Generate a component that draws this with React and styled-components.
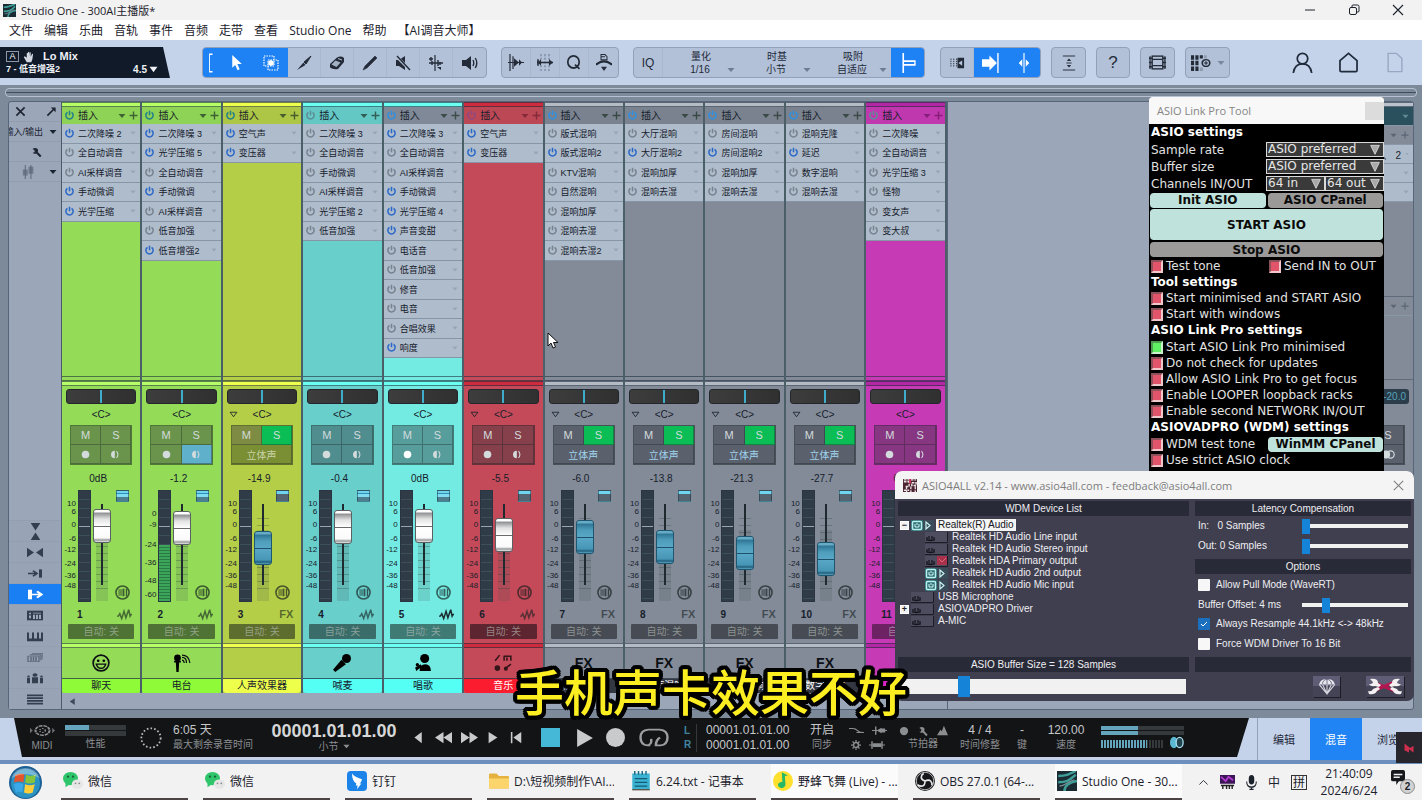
import React, { useState } from 'react'
import styled, { createGlobalStyle } from 'styled-components'

const GlobalStyle = createGlobalStyle`
    * {
        box-sizing: border-box;
    }

    body {
        margin: 0;
        font-family: "Open Sans", "Noto Sans CJK SC", sans-serif;
        font-size: 12px;
        color: #1c222c;
    }

    button, input, select {
        font: inherit;
        color: inherit;
        margin: 0;
        padding: 0;
        border: 0;
        background: none;
    }
`

const ui = '"Liberation Sans", "Noto Sans CJK SC", sans-serif'

const Page = styled.div`
    position: relative;
    display: flex;
    flex-direction: column;
    min-height: 100vh;
    overflow: hidden;
    background: #7d8a9a;
`

/* ---------- icons ---------- */

const shapes = {
    logo: <><path d="M0 0h16v16H0z" fill="#1a2b33" /><path d="M1 4c6 0 8-1 14-4M1 9c8 0 9-2 14-6M6 16c0-5 4-7 10-8" stroke="#3f9d98" strokeWidth="2" fill="none" /><path d="M2 12c5 0 5-3 12-5" stroke="#7b8f98" fill="none" /></>,
    min: <path d="M3 8h10" stroke="currentColor" />,
    restore: <><rect x="3.500" y="5.500" width="7" height="7" rx="1.500" fill="none" stroke="currentColor" /><path d="M6 5V4q0-1 1-1h4.500q1.500 0 1.500 1.500V9q0 1-1 1h-1" fill="none" stroke="currentColor" /></>,
    close: <path d="M3 3l10 10M13 3L3 13" stroke="currentColor" strokeWidth="1.100" />,
    cross: <path d="M2 2l12 12M14 2L2 14" stroke="currentColor" strokeWidth="2.400" />,
    power: <path d="M5 3.500A5.300 5.300 0 1 0 11 3.500M8 1v6.500" stroke="currentColor" strokeWidth="2.200" fill="none" />,
    caret: <path d="M1 4h14L8 12z" fill="currentColor" />,
    drop: <path d="M1 2h14L8 15z" fill="#a9a9a9" stroke="#e3e3e3" strokeWidth="1.200" />,
    caretLine: <path d="M2 4h12L8 12z" fill="none" stroke="currentColor" strokeWidth="1.500" />,
    plus: <path d="M8 1v14M1 8h14" stroke="currentColor" strokeWidth="2.500" />,
    hand: <path d="M5 15L1 8l1.500-1L5 9V3q.8-1 1.500 0v4V1.500q1-1 1.700 0V7l.5-5q1-1 1.600 0v5.500L12 4q1-.8 1.400.3L12.500 11 11 15z" fill="#d3d8e2" />,
    bracket: <path d="M10 1H6v14h4" fill="none" stroke="currentColor" strokeWidth="1.200" />,
    cursor: <path d="M4 1l9 8.500H8.800l2.200 4.800-2 .9-2.200-4.900L4 13z" fill="currentColor" />,
    marquee: <><path d="M1 1h10v10H1zM5 5h10v10H5z" fill="none" stroke="currentColor" strokeWidth="1.200" strokeDasharray="1.500 1" /><path d="M6 6l4 4M10 6l-4 4M8 5v6M5 8h6" stroke="currentColor" strokeWidth="1.500" /></>,
    brush: <><path d="M15 1L8 7l2 2z" fill="currentColor" stroke="currentColor" /><path d="M7.500 7.500L1 15l8.500-5z" fill="currentColor" /></>,
    eraser: <><path d="M1 9L8 2.500q4-2 7 .5v4L9 14q-5 1-8-1.500z" fill="currentColor" /><path d="M2.500 9.500l4-4 5 2-4 4.500z" fill="#a3b1c5" /><path d="M9 3.500l4 1.500" stroke="#b4c2d6" /></>,
    pencil: <path d="M13 1l2 2L5 13l-4 2 2-4z" fill="currentColor" stroke="currentColor" strokeWidth=".6" />,
    mute: <><path d="M1 5h3l6-4v14l-6-4H1z" fill="currentColor" /><path d="M1 1l14 14" stroke="#b2c1d8" strokeWidth="3" /><path d="M2 1l13 14" stroke="currentColor" strokeWidth="1.400" /></>,
    bend: <><path d="M7 0v16" stroke="currentColor" strokeWidth="1.200" /><path d="M1 4h4M3 2v4M1 8h14" stroke="currentColor" strokeWidth="1.300" fill="none" /><path d="M4 6v4M10 5v6M12 7v3" stroke="currentColor" strokeWidth="1.400" /><path d="M9 12h4v3z" fill="currentColor" /></>,
    listen: <><path d="M0 5h4l5-4v14l-5-4H0z" fill="currentColor" /><path d="M11 5q1.500 3 0 6M13.300 3q3 5 0 10" fill="none" stroke="currentColor" strokeWidth="1.400" /></>,
    strip1: <><path d="M2 0v16M5 2v12" stroke="currentColor" strokeWidth="1.200" /><path d="M6 4l5 4-5 4zM11 5l3 3-3 3z" fill="currentColor" /><path d="M0 8h16" stroke="currentColor" /></>,
    strip2: <><path d="M4 0v16M8 0v16M12 0v16" stroke="currentColor" strokeDasharray="2 1.500" strokeOpacity=".5" /><path d="M0 8h16M1 5v6" stroke="currentColor" strokeWidth="1.600" /><path d="M12 5l4 3-4 3zM4 5L1 8l3 3z" fill="currentColor" /></>,
    q: <><circle cx="7.500" cy="7.500" r="5.700" fill="none" stroke="currentColor" strokeWidth="1.700" /><path d="M9 10l4.500 4" stroke="currentColor" strokeWidth="1.700" /></>,
    lens: <><path d="M0 10q8-6 16 0" fill="none" stroke="currentColor" strokeWidth="2" /><path d="M5 .5h4l2 2v3H5zM5 2.500h4" fill="none" stroke="currentColor" /><path d="M5 12h6l-3 4z" fill="currentColor" /></>,
    snap: <><path d="M4 0v16" stroke="currentColor" strokeWidth="1.500" /><path d="M4 6.500h11v3H4" fill="none" stroke="currentColor" strokeWidth="1.300" /></>,
    follow: <><path d="M1 3v10M4 3v10M7 3v10" stroke="currentColor" strokeDasharray="1.500 1" /><path d="M8 2h7v12H8z" fill="currentColor" /><path d="M13 5v6l-4-3z" fill="#b9c8de" /></>,
    arrowBar: <><path d="M0 5h7V2l7 6-7 6v-3H0z" fill="currentColor" /><path d="M15 0v16" stroke="currentColor" strokeWidth="1.300" /></>,
    split: <><path d="M8 0v16" stroke="currentColor" strokeWidth="1.300" /><path d="M6 5v6L2 8zM10 5v6l4-3z" fill="currentColor" /></>,
    vfit: <><path d="M1 1h14M1 15h14M5 8h6" stroke="currentColor" /><path d="M5.500 6L8 3.500 10.500 6zM5.500 10L8 12.500l2.500-2.500z" fill="currentColor" /></>,
    film: <><rect x="3" y="2" width="10" height="12" fill="none" stroke="currentColor" strokeWidth="1.300" /><path d="M0 4h3M0 8h3M0 12h3M13 4h3M13 8h3M13 12h3M3 5h10M3 11h10M1 2v12M15 2v12" stroke="currentColor" strokeWidth="1.200" /></>,
    grid: <><path d="M0 1h2.500v4H0zM3.500 1H6v4H3.500zM0 6h2.500v4H0zM3.500 6H6v4H3.500zM0 11h2.500v4H0zM3.500 11H6v4H3.500zM7 1h2.500v3H7z" fill="currentColor" /><path d="M10.500 1h2v3h-2zM7 12h2.500v3H7z" fill="#8e9cb0" /><circle cx="12" cy="8" r="3" fill="none" stroke="currentColor" strokeWidth="1.300" /><path d="M12 6.500v3M10.500 8h3" stroke="currentColor" /></>,
    user: <><circle cx="8" cy="5" r="4" fill="none" stroke="currentColor" strokeWidth="1.300" /><path d="M1 16q1-7 7-7t7 7" fill="none" stroke="currentColor" strokeWidth="1.300" /></>,
    home: <path d="M1.500 6.500L8 1l6.500 5.500v7.500q0 1-1 1h-11q-1 0-1-1z" fill="none" stroke="currentColor" strokeWidth="1.300" />,
    page: <path d="M3 1h6l4 4v10H3z" fill="none" stroke="currentColor" />,
    pin: <><path d="M2 14L12 4" stroke="currentColor" strokeWidth="2.500" /><path d="M7 2h7v7z" fill="currentColor" /></>,
    wrench: <path d="M2 4q3-3 7 0 1 2 0 4l5 5-2 2-5-5q-3 1-5-1 3 0 3-2T2 4z" fill="currentColor" />,
    fader: <><path d="M4 0v16M11 0v16" stroke="currentColor" strokeWidth="1.200" /><path d="M1 5h6v7H1zM8 2h6v8H8z" fill="currentColor" fillOpacity=".7" /></>,
    hourglass: <path d="M1 0h14L8 7zM8 9l7 7H1z" fill="currentColor" />,
    bowtie: <path d="M0 1l7 7-7 7zM16 1L9 8l7 7z" fill="currentColor" />,
    toBar: <><path d="M1 8h8M6 4l4 4-4 4" stroke="currentColor" strokeWidth="2" fill="none" /><path d="M12 2h3v12h-3z" fill="currentColor" /></>,
    fromBar: <><path d="M1 1h4v14H1z" fill="currentColor" /><path d="M5 8h9M10 3.500L14.500 8 10 12.500" stroke="currentColor" strokeWidth="2.500" fill="none" /></>,
    rack: <><path d="M0 1h16v14H0z" fill="currentColor" /><path d="M2 4h2v2H2zM2 8h2v4H2zM6 7h2v6H6zM9 7h2v6H9zM12 7h2v6h-2zM6 4h8v1H6z" fill="#9ca8ba" /></>,
    keys: <path d="M0 2h2v9h3V2h2v9h3V2h2v9h2V2h2v13H0z" fill="currentColor" />,
    stack: <><path d="M1 6h11v8H1zM3 4h11v8M5 2h11v8" fill="none" stroke="currentColor" strokeWidth="1.300" /><path d="M4 7v6M6.500 7v6M9 7v6" stroke="currentColor" strokeWidth="1.500" /></>,
    people: <><path d="M0 7h3v8H0zM5 6h6v9H5zM13 7h3v8h-3z" fill="currentColor" /><circle cx="8" cy="3" r="2.500" fill="currentColor" /><circle cx="1.500" cy="5" r="1.300" fill="currentColor" /><circle cx="14.500" cy="5" r="1.300" fill="currentColor" /></>,
    lines: <path d="M0 2h16M0 6h16M0 10h16M0 14h16" stroke="currentColor" strokeWidth="2.200" />,
    wave: <path d="M0 10h1.500L3 7l2 6L7.500 4l2 8 3-10 1.500 8 1-2h1" stroke="currentColor" strokeWidth="1.600" fill="none" />,
    knob: <><circle cx="8" cy="8" r="7" fill="none" stroke="currentColor" strokeWidth="1.700" /><path d="M3.500 4.500h4v7h-4z" fill="currentColor" fillOpacity=".55" /><path d="M8 4h2v8H8zM11.500 4h1.500v8h-1.500z" fill="currentColor" /></>,
    dot: <circle cx="8" cy="8" r="5.500" fill="currentColor" />,
    monitor: <><path d="M7 2.500a5.500 5.500 0 0 0 0 11z" fill="currentColor" /><path d="M9.500 3q4 5 0 10" fill="none" stroke="currentColor" strokeWidth="1.500" /></>,
    stereo: <><circle cx="5" cy="8" r="5" fill="currentColor" /><circle cx="10.500" cy="8" r="4.500" fill="none" stroke="currentColor" strokeWidth="1.500" /></>,
    link: <><ellipse cx="4.500" cy="8" rx="4.500" ry="7" fill="#5cb9d4" /><ellipse cx="11" cy="8" rx="4" ry="6.200" fill="#23434e" stroke="#a9e0ee" strokeWidth="1.500" /></>,
    smile: <><circle cx="8" cy="8" r="7" fill="none" stroke="#0c0f14" strokeWidth="1.500" /><circle cx="5.500" cy="6" r="1.200" /><circle cx="10.500" cy="6" r="1.200" /><path d="M3.800 9h8.400q-1 3.700-4.200 3.700T3.800 9z" fill="none" stroke="#0c0f14" strokeWidth="1.300" /></>,
    radio: <><circle cx="4" cy="3.500" r="3" /><path d="M2.500 7h3l-.5 9H3zM1 6h6v1.500H1z" /><path d="M8 3q4 0 4 5M8 1q6 0 7 7M8 5.500q1.500 0 2 2.500" fill="none" stroke="#0c0f14" strokeWidth="1.100" /></>,
    mic: <><circle cx="12" cy="4" r="4" /><path d="M7.500 5l4 4L2 16l-2-2z" /></>,
    singer: <><circle cx="9.500" cy="4" r="4" /><path d="M5 15q0-6 5-6t5 6zM1 12l5-3 1 2-5 4z" /><circle cx="3" cy="9.500" r="1.500" /></>,
    band: <><path d="M1 6l4-5M8.500 2h6.500v4M9 2v4M11.500 3v3M10 13l5-4" stroke="#35141a" strokeWidth="1.400" fill="none" /><circle cx="3" cy="12.500" r="2.500" fill="#35141a" /><circle cx="10.500" cy="13" r="1.800" fill="#35141a" /></>,
    midi: <><circle cx="8" cy="8" r="4.500" fill="none" stroke="#8d9094" strokeDasharray="2.500 .6" strokeWidth="1.300" /><circle cx="8" cy="8" r="1.800" fill="none" stroke="#8d9094" strokeDasharray="1 1" /><path d="M0 5.500L1.800 8 0 10.500zM14.200 5.500L16 8l-1.800 2.500z" fill="#6b6e72" /></>,
    ring: <circle cx="8" cy="8" r="7" fill="none" stroke="#b8babc" strokeWidth="1.300" strokeDasharray="1.200 1.500" />,
    back: <path d="M12 2v12L3 8z" fill="currentColor" />,
    rew: <path d="M8 2v12L0 8zM16 2v12L8 8z" fill="currentColor" />,
    fwd: <path d="M0 2v12l8-6zM8 2v12l8-6z" fill="currentColor" />,
    next: <path d="M3 2v12l10-6z" fill="currentColor" />,
    start: <><path d="M14 2v12L5 8z" fill="currentColor" /><path d="M3 2v12" stroke="currentColor" strokeWidth="1.800" /></>,
    stop: <path d="M0 0h16v16H0z" fill="#45b8d8" />,
    play: <path d="M1 0v16l14-8z" fill="currentColor" />,
    rec: <circle cx="8" cy="8" r="8" fill="currentColor" />,
    loop: <path d="M6 14H4.500Q.8 13.500.8 8T5 2h6q4.200.5 4.200 6t-3.700 6H9q0-4 2.200-6M4 14q3 0 2.500-5" fill="none" stroke="currentColor" strokeWidth="1.300" />,
    curve: <path d="M0 5h4q3 0 5 3t7 3M8 11h6" fill="none" stroke="currentColor" strokeWidth="1.500" />,
    gear: <><circle cx="8" cy="8" r="4" fill="none" stroke="currentColor" strokeWidth="2.500" /><path d="M8 0v3M8 13v3M0 8h3M13 8h3M2.500 2.500l2 2M11.500 11.500l2 2M13.500 2.500l-2 2M4.500 11.500l-2 2" stroke="currentColor" strokeWidth="2" /></>,
    punch: <><path d="M4 2v12M0 8h16" stroke="currentColor" strokeWidth="1.500" /><path d="M5 8l5-4v8zM10 5h4v6h-4z" fill="currentColor" /></>,
    punch2: <><path d="M3 2v12M13 2v12M0 8h16" stroke="currentColor" strokeWidth="1.500" /><path d="M4 5h8v6H4z" fill="currentColor" /></>,
    metro: <path d="M0 15L5 7l2 2 3-8 6 14z" fill="currentColor" />,
    start7: <><circle cx="8" cy="8" r="8" fill="#1c5f94" /><circle cx="8" cy="8.500" r="7" fill="#2b93c4" /><path d="M3 4.500q2-1.500 4.500-.5L7 8q-2-1-4.600 0z" fill="#e2552c" /><path d="M8.300 4.200q2 1 4.700 0L12.500 8q-2.500 1-4.700 0z" fill="#86c440" /><path d="M2.300 8.800q2.500-1 4.600 0l-.5 4q-2-1-3 .2z" fill="#3ba8e8" /><path d="M7.800 8.800q2.200 1 4.700 0l-1 4q-2 1-4.200 0z" fill="#fbce3a" /><path d="M1 6q2-5 7-5t7 5Q8 2 1 6z" fill="#fff" fillOpacity=".35" /></>,
    wechat: <><ellipse cx="6" cy="6" rx="6" ry="5.300" fill="#2fc56b" /><path d="M2 10l0 3 3-2z" fill="#2fc56b" /><circle cx="4" cy="4.500" r=".9" fill="#17633a" /><circle cx="8" cy="4.500" r=".9" fill="#17633a" /><ellipse cx="11.500" cy="10.500" rx="4.500" ry="3.800" fill="#e6e6e6" /><circle cx="10" cy="9.800" r=".7" fill="#8b8b8b" /><circle cx="13" cy="9.800" r=".7" fill="#8b8b8b" /></>,
    ding: <><rect width="16" height="16" rx="3" fill="#1c84e8" /><path d="M4 2q2 3 8 4.500-.5 2.500-2 3.500h1.500L8 14.500l.5-3H7l.5-1.500Q4 8 4 2z" fill="#fff" /></>,
    folder: <><path d="M0 3q0-1 1-1h5l2 2h7q1 0 1 1v9H0z" fill="#e6b23f" /><path d="M0 6h16v7q0 1-1 1H1q-1 0-1-1z" fill="#fbd56c" /></>,
    note: <><path d="M1 2h14v13H1z" fill="#3ab3d3" /><path d="M3 6h10M3 9h10M3 12h10" stroke="#155b76" /><path d="M3 0v3M6 0v3M9 0v3M12 0v3" stroke="#1f6b84" strokeWidth="1.200" /><path d="M1 15h14" stroke="#5d4b3c" /></>,
    music: <><circle cx="8" cy="8" r="8" fill="#ffe02e" /><path d="M7 1l5 2.500-2.500.5.5 7q-1 3-3.500 2.500T4 11t3.500-2.500z" fill="#27b866" /></>,
    obs: <><circle cx="8" cy="8" r="8" fill="#16171a" /><g fill="none" stroke="#e9e9e9" strokeWidth="1.300"><path d="M8 8q-3-1-3-3t2-3M8 8q3-1.500 4.500 0t1 3.500M8 8q0 3.500-2 4t-4-1" /><circle cx="8" cy="8" r="7" strokeWidth=".6" /></g></>,
    up: <path d="M2 11l6-6 6 6" fill="none" stroke="currentColor" strokeWidth="1.300" />,
    toolTray: <><path d="M0 0h16v10H0z" fill="#3c1558" /><path d="M1 2l5 5 3-5 5 4" stroke="#b23bd0" strokeWidth="2" fill="none" /><path d="M1 12h14M3 12v4M7 12v4M10 12v4M13 12v4" stroke="#222" strokeWidth="1.500" /></>,
    mic2: <><rect x="4" y="0" width="8" height="10" rx="4" fill="currentColor" /><path d="M1 7q0 6 7 6t7-6M8 13v3M5 15.500h6" fill="none" stroke="currentColor" strokeWidth="1.500" /></>,
    chat: <path d="M0 2q0-2 2-2h12q2 0 2 2v8q0 2-2 2H9l-3 4v-4H2q-2 0-2-2zM3 4v1.500h10V4zM3 7v1.500h7V7z" fill="#16181c" fillRule="evenodd" />,
    asio: <><path d="M0 1h16v14H0z" fill="#4b2430" /><path d="M1 2h14M1 4h6v5H2M10 5h5v3h-5zM9 9v6M14 9v6M1 13h6M4 9v6" stroke="#ece5e8" strokeWidth="1.500" fill="none" strokeDasharray="3 1" /><path d="M8 1v5" stroke="#d0335a" strokeWidth="2" /></>,
    chute: <><path d="M1 6q1-5 7-5t7 5z" fill="#e6e6ee" /><path d="M1 6l7 9 7-9M4 6l4 9 4-9M8 6v9" stroke="#d3d3de" fill="none" /><path d="M4 6q0-4 4-5 4 1 4 5M8 1v5" stroke="#55536a" strokeWidth=".7" fill="none" /></>,
    tray: <path d="M4 4l5 4 3-2v6L8 9v3L4 10z" fill="#cf2f4e" />,
}

const Svg = styled.svg`
    display: block;
    flex: none;
`

function Icon({ name, size = 16, w, h, ...rest }) {
    return (
        <Svg
            viewBox="0 0 16 16"
            width={w || size}
            height={h || size}
            preserveAspectRatio="none"
            aria-hidden="true"
            {...rest}
        >
            {shapes[name]}
        </Svg>
    )
}

/* ---------- title bar and menu ---------- */

const TitleBar = styled.header`
    display: flex;
    align-items: center;
    height: 20px;
    padding: 0 16px 0 3px;
    gap: 5px;
    background: #f2f2f2;
    font-size: 11px;
`

const WindowButtons = styled.div`
    display: flex;
    gap: 28px;
    margin-left: auto;
`

const IconButton = styled.button`
    display: flex;
    align-items: center;
    justify-content: center;
    flex: none;
    color: ${(p) => p.$color || 'inherit'};
`

const Menu = styled.nav`
    display: flex;
    align-items: center;
    height: 20px;
    padding: 1px 0 0 9px;
    gap: 11px;
    background: #fff;

    button {
        line-height: 20px;
        white-space: nowrap;
    }
`

/* ---------- toolbar ---------- */

const Toolbar = styled.div`
    display: flex;
    align-items: center;
    height: 45px;
    padding-right: 16px;
    background: #c4d2ea;
    color: #1f2a3a;
`

const Info = styled.div`
    width: 170px;
    height: 31px;
    padding: 3px 12px 0 6px;
    background: #101a29;
    color: #eef1f6;
    font: bold 11px/13px ${ui};
    clip-path: polygon(0 0, 163px 0, 100% 100%, 0 100%);
`

const InfoLine = styled.div`
    display: flex;
    align-items: center;
    gap: 4px;
    height: 13px;

    b {
        margin-left: 4px;
    }

    small {
        font-size: 9px;
    }

    span {
        display: flex;
        gap: 2px;
        margin-left: auto;
        align-items: center;
        font-size: 10px;
    }
`

const Key = styled.span`
    && {
        border: 1px solid #8d97a8;
        margin: 0;
        width: 13px;
        height: 11px;
        justify-content: center;
        font-size: 9px;
        font-weight: normal;
    }
`

const Group = styled.div`
    display: flex;
    flex: none;
    height: 31px;
    margin-left: ${(p) => p.$gap || 10}px;
    border: 1px solid #92a1b9;
    border-radius: 4px;
    background: #b2c1d8;
    overflow: hidden;
`

const Tool = styled.button`
    display: flex;
    align-items: center;
    justify-content: center;
    gap: 6px;
    width: ${(p) => p.$w || 33}px;
    font: ${(p) => p.$size || 12}px ${ui};
    background: ${(p) => (p.$on ? '#1e82f5' : 'transparent')};
    color: ${(p) => (p.$on ? '#fff' : '#232b38')};
    border-right: 1px solid ${(p) => (p.$on ? '#1e82f5' : '#a9b8cf')};

    &:last-child {
        border-right: 0;
    }
`

const Pick = styled.label`
    display: flex;
    flex-direction: column;
    align-items: center;
    width: 76px;
    font: 10px/13px ${ui};
    padding-top: 2px;

    > span {
        display: flex;
        align-items: center;
        gap: 8px;
        width: 100%;
        padding-left: 18px;
        color: #6d7c92;
    }

    select {
        width: 38px;
        appearance: none;
        text-align: center;
        text-align-last: center;
        color: #1f2a3a;
    }
`

const Account = styled.div`
    display: flex;
    align-items: center;
    gap: 25px;
    margin-left: auto;
`

function ToolbarPick({ label, value }) {
    return (
        <Pick>
            {label}
            <span>
                <select defaultValue={value}>
                    <option>{value}</option>
                </select>
                <Icon name="caret" size={8} />
            </span>
        </Pick>
    )
}

/* ---------- mixer ---------- */

const Ruler = styled.div`
    height: 9px;
    margin: 3px 5px 4px;
    border: 1px solid #b6c2d2;
    border-radius: 4px;
    background: linear-gradient(#7d8a9a 3px, #3f4d60 3px, #3f4d60 4px, #7d8a9a 4px);
`

const Mixer = styled.main`
    flex: 1;
    display: grid;
    grid-template-columns: 53px minmax(0, 886fr) minmax(0, 467fr);
    margin: 0 8px 8px;
    border: 1px solid #56657a;
    border-radius: 3px;
    background: #9ba7b9;
    font-family: ${ui};
`

const Side = styled.aside`
    display: flex;
    flex-direction: column;
    border-right: 1px solid #4b596b;
    color: #1d2532;
`

const SideRow = styled.div`
    display: flex;
    align-items: center;
    justify-content: flex-end;
    height: 20px;
    gap: ${(p) => p.$gap || 6}px;
    padding-right: 4px;
    border-bottom: 1px solid #929eb0;
    font-size: 9px;
    white-space: nowrap;
    overflow: hidden;
`

const SideTools = styled.div`
    display: flex;
    flex-direction: column;
    margin-top: auto;
`

const SideTool = styled.button`
    display: flex;
    align-items: center;
    justify-content: center;
    height: 21px;
    border-top: 1px solid #939fb1;
    background: ${(p) => (p.$on ? '#1a7ff2' : '#98a4b6')};
    color: ${(p) => (p.$on ? '#fff' : p.$dim ? '#5c687b' : '#333e4f')};
`

const Console = styled.div`
    display: flex;
    flex-direction: column;
`

const Channels = styled.div`
    flex: 1;
    display: grid;
    grid-template-columns: repeat(11, minmax(0, 1fr));
`

const Strip = styled.section`
    display: flex;
    flex-direction: column;
    background: ${(p) => p.$c.base};
    border-right: 2px solid #4a5f68;
    color: #16202b;
`

const Bright = styled.div`
    height: 5px;
    flex: none;
    border-top: 1px solid rgba(30, 45, 60, 0.6);
    border-bottom: 1px solid rgba(30, 45, 60, 0.6);
    background: ${(p) => p.$c.bright};
`

const Head = styled.div`
    display: flex;
    align-items: center;
    gap: 3px;
    height: 17px;
    padding: 0 2px;
    background: ${(p) => p.$c.head || 'rgba(0, 20, 30, 0.04)'};
    font-size: 10px;
    line-height: 13px;

    span {
        margin: 0 auto 0 0;
    }
`

const Adders = styled.div`
    display: flex;
    align-items: center;
    gap: 3px;
    color: ${(p) => p.$c.ink || 'rgba(30, 50, 40, 0.7)'};
`

const Inserts = styled.ul`
    display: grid;
    grid-template-rows: repeat(12, 1fr);
    height: 234px;
    margin: 0 0 18px;
    padding: 0;
    list-style: none;
`

const Insert = styled.li`
    display: flex;
    align-items: center;
    gap: 3px;
    padding: 0 4px 0 2px;
    background: #afbccb;
    border-bottom: 1px solid #8796a7;
    font-size: 9px;
    white-space: nowrap;

    span {
        margin-right: auto;
    }
`

const Pan = styled.div`
    height: 15px;
    margin: 3px 4px;
    border: 1px solid #23272b;
    border-radius: 3px;
    background: linear-gradient(90deg, #3d3d3d, #303030);
    display: flex;
    justify-content: center;

    &::after {
        content: '';
        width: 2px;
        background: #3eaccb;
    }
`

const PanText = styled.div`
    display: grid;
    grid-template-columns: 1fr auto 1fr;
    align-items: center;
    height: 14px;
    padding: 0 6px;
    font-size: 10px;
`

const Switches = styled.div`
    display: grid;
    grid-template-columns: 1fr 1fr;
    grid-template-rows: 19px 19px;
    margin: 4px 8px 0;
    border: 1px solid rgba(20, 30, 30, 0.45);
    background: rgba(20, 30, 30, 0.15);
`

const Switch = styled.button`
    display: flex;
    align-items: center;
    justify-content: center;
    grid-column: ${(p) => (p.$wide ? '1 / 3' : 'auto')};
    border: solid rgba(20, 30, 30, 0.35);
    border-width: 0 1px 1px 0;
    background: ${(p) => p.$bg || (p.$flat ? '#5b606d' : p.$wide ? 'rgba(20, 30, 10, 0.25)' : 'rgba(60, 60, 70, 0.32)')};
    color: ${(p) => p.$ink || '#d3dbdc'};
    font-size: ${(p) => (p.$wide ? 10 : 11)}px;
`

const Level = styled.div`
    height: 25px;
    padding-right: 6px;
    line-height: 28px;
    text-align: center;
    font-size: 10px;
`

const MeterRow = styled.div`
    display: grid;
    grid-template-columns: 14px 13px 18px 16px;
    column-gap: 2px;
    height: 112px;
`

const Scale = styled.div`
    display: flex;
    flex-direction: column;
    text-align: right;
    font: 8px/8px ${ui};
`

const Mark = styled.span`
    margin-top: ${(p) => p.$top}px;
`

const Meter = styled.div`
    border: 1px solid #2a3442;
    background:
        linear-gradient(transparent 35px, #9aa4ae 35px, #9aa4ae 36px, transparent 36px),
        repeating-linear-gradient(#303b48 0, #303b48 8px, #3d5058 8px, #3d5058 9px);
    display: flex;
    align-items: flex-end;

    &::after {
        content: '';
        width: 100%;
        height: ${(p) => p.$fill || 0}px;
        background: repeating-linear-gradient(#3ba65a 0, #3ba65a 2px, #2b7a45 2px, #2b7a45 3px);
    }
`

const Slot = styled.div`
    background:
        linear-gradient(90deg, transparent 8px, #1f2930 8px, #1f2930 10px, transparent 10px) 0 14px / 100% 81px no-repeat,
        repeating-linear-gradient(rgba(40, 60, 60, 0.3) 0, rgba(40, 60, 60, 0.3) 1px, transparent 1px, transparent 7px) 3px 28px / 12px 72px no-repeat,
        linear-gradient(rgba(60, 80, 80, 0.17), rgba(60, 80, 80, 0.17)) 3px 40px / 12px 71px no-repeat;
`

const Fader = styled.input`
    display: block;
    appearance: none;
    writing-mode: vertical-lr;
    direction: rtl;
    width: 18px;
    height: 112px;

    &::-webkit-slider-thumb {
        appearance: none;
        width: 18px;
        height: 34px;
        border: 1px solid ${(p) => (p.$blue ? '#1f5670' : '#5b6063')};
        border-radius: 3px;
        background: ${(p) =>
            p.$blue
                ? 'linear-gradient(#67acc6 2px, #2f7594 3px, #4e9dbb 9px, #58a7c6 16px, #1d5169 16px, #1d5169 17px, #58a7c6 17px, #4896b6 28px, #1f5d79 30px, #5aa6c3)'
                : 'linear-gradient(#fff 2px, #8f9092 3px, #e2e2e2 9px, #fff 16px, #6b6b6b 16px, #6b6b6b 17px, #fff 17px, #fafafa 28px, #97999b 30px, #e8e8e8)'};
    }
`

const MeterSide = styled.div`
    display: flex;
    flex-direction: column;
    justify-content: space-between;
    align-items: center;
    padding: 0 0 2px 2px;
    color: rgba(20, 30, 30, 0.68);
`

const Mini = styled.div`
    width: 13px;
    height: 12px;
    border: 1px solid rgba(20, 50, 60, 0.5);
    background: ${(p) =>
        p.$half
            ? 'linear-gradient(#6fd4ee 3px, #566370 3px)'
            : 'linear-gradient(#6fd4ee 2px, #2e8fb0 2px, #2e8fb0 3px, #7fdcf2 3px, #7fdcf2 6px, #4d7f8e 6px)'};
`

const NumberRow = styled.div`
    display: flex;
    align-items: center;
    justify-content: space-between;
    height: 21px;
    padding: 3px 8px 0 15px;
    font-size: 10px;
    font-weight: bold;
`

const Kind = styled.span`
    color: ${(p) => (p.$strong ? '#1c2b30' : 'rgba(20, 30, 30, 0.6)')};
    font-size: 11px;
`

const Auto = styled.button`
    height: 15px;
    margin: 1px 6px 4px;
    border-radius: 1px;
    background: ${(p) => p.$c.auto || 'rgba(20, 30, 25, 0.55)'};
    color: rgba(190, 195, 190, 0.6);
    font-size: 10px;
    line-height: 14px;
`

const Badge = styled.div`
    flex: 1;
    display: flex;
    align-items: center;
    justify-content: center;
    min-height: 31px;
    border-bottom: 1px solid rgba(30, 45, 60, 0.7);
    font: bold 14px ${ui};
    color: #0c0f14;
`

const Name = styled.div`
    height: 14px;
    line-height: 14px;
    border-radius: 0 0 4px 4px;
    background: ${(p) => p.$c.name};
    color: ${(p) => p.$c.nameInk || '#16202b'};
    text-align: center;
    font-size: 10px;
    overflow: hidden;
`

const ScrollRow = styled.div`
    display: flex;
    align-items: center;
    height: 16px;
    padding-left: 6px;
    color: #3f4b5d;
`

const RightArea = styled.div`
    display: flex;
    flex-direction: column;
    align-items: flex-end;
    border-left: 1px solid #56657a;
`

const Master = styled.section`
    flex: 1;
    display: flex;
    flex-direction: column;
    width: 80px;
    background: #838b99;
    color: #5b6675;
    font-size: 10px;
`

const MasterRow = styled.div`
    display: flex;
    align-items: center;
    justify-content: flex-end;
    gap: 4px;
    height: 19px;
    padding-right: 4px;
    background: ${(p) => p.$bg || 'transparent'};
    border-bottom: 1px solid #8a97a7;
    color: ${(p) => p.$ink || 'inherit'};
`

const MasterGap = styled.div`
    height: ${(p) => p.$h}px;
    border-bottom: 1px solid #5f6b7a;
`

const MasterValue = styled.div`
    align-self: flex-end;
    margin: 9px 4px 17px;
    width: 60px;
    height: 15px;
    border-radius: 3px;
    background: #2b3d4a;
    color: #58a3ba;
    text-align: right;
    line-height: 15px;
    padding-right: 3px;
`

const palette = {
    green: { base: '#94db58', bright: '#b6ff66', name: '#8ffb38' },
    olive: { base: '#b5ce47', bright: '#efff4d', name: '#eeff4b' },
    cyan: { base: '#68cfcb', bright: '#6bfff2', name: '#54fff3' },
    aqua: { base: '#74ebe2', bright: '#6bfff2', name: '#54fff3', head: '#7f8997' },
    red: { base: '#c44a59', bright: '#cf2b3e', name: '#fb1c30', nameInk: '#fff', ink: 'rgba(110, 30, 45, .7)', auto: '#5d2530' },
    grey: { base: '#838b98', bright: '#b4bbc5', name: '#333742', nameInk: '#fff', head: '#79828e', auto: '#474b53' },
    pink: { base: '#c73ab5', bright: '#b427a4', name: '#d824c4', nameInk: '#fff', ink: 'rgba(110, 20, 100, .7)', auto: '#6d2264' },
}

// a leading "*" marks an insert that is switched on; fader runs from 0 (bottom) to 78 (top)
const channels = [
    { c: 'green', fader: 59, level: '0dB', icon: 'smile', name: '聊天', power: 1, inserts: ['*二次降噪 2', '全自动调音', 'AI采样调音', '*手动微调', '*光学压缩'] },
    { c: 'green', fader: 57, level: '-1.2', icon: 'radio', name: '电台', power: 1, live: true, inserts: ['*二次降噪 3', '*光学压缩 5', '全自动调音', '*手动微调', 'AI采样调音', '低音加强', '*低音增强2'] },
    { c: 'olive', fader: 37, level: '-14.9', fx: true, name: '人声效果器', power: 1, inserts: ['*空气声', '*变压器'] },
    { c: 'cyan', fader: 58, level: '-0.4', icon: 'mic', name: '喊麦', inserts: ['二次降噪 3', '全自动调音', '手动微调', 'AI采样调音', '光学压缩 2', '低音加强'] },
    { c: 'aqua', fader: 59, level: '0dB', icon: 'singer', name: '唱歌', power: 1, inserts: ['*二次降噪 3', '全自动调音', 'AI采样调音', '*手动微调', '*光学压缩 4', '*声音变甜', '电话音', '低音加强', '修音', '电音', '合唱效果', '*响度'] },
    { c: 'red', fader: 50, level: '-5.5', icon: 'band', name: '音乐', power: 1, fold: true, inserts: ['*空气声', '*变压器'] },
    { c: 'grey', fader: 48, level: '-6.0', fx: true, name: '版式混响', power: 1, inserts: ['版式混响', '*版式混响2', 'KTV混响', '自然混响', '混响加厚', '混响去湿', '混响去湿2'] },
    { c: 'grey', fader: 38, level: '-13.8', fx: true, name: '大厅混响', power: 1, inserts: ['大厅混响', '*大厅混响2', '混响加厚', '混响去湿'] },
    { c: 'grey', fader: 32, level: '-21.3', fx: true, name: '房间混响', power: 1, inserts: ['房间混响', '*房间混响2', '混响加厚', '混响去湿'] },
    { c: 'grey', fader: 26, level: '-27.7', fx: true, name: '数字混响', power: 1, inserts: ['混响克隆', '*延迟', '数字混响', '混响去湿'] },
    { c: 'pink', fader: 59, level: '0dB', icon: 'mic', name: '变声', inserts: ['二次降噪', '全自动调音', '光学压缩 3', '怪物', '变女声', '变大叔'] },
]

const scale = [[10, 10], [6, 0], [0, 5], [-6, 6], [-12, 3], [-24, 6], [-36, 4], [-48, 2]]
const liveScale = [[0, 20], [-9, 3], [-24, 12], [-36, 10], [-48, 10], [-60, 6]]

function ChannelStrip({ channel, number }) {
    const c = palette[channel.c]
    const grey = channel.c === 'grey'
    const [value, setValue] = useState(channel.fader)

    return (
        <Strip $c={c}>
            <Bright $c={c} />
            <Head $c={c}>
                <Icon name="power" size={11} color={channel.power ? (channel.c === 'red' ? '#8e4a80' : grey || c.head ? '#2f8fe0' : '#217f8c') : '#5d8c96'} />
                <span>插入</span>
                <Adders $c={c}>
                    <Icon name="caret" size={8} />
                    <Icon name="plus" size={9} />
                </Adders>
            </Head>
            <Inserts>
                {channel.inserts.map((text) => {
                    const on = text[0] === '*'
                    return (
                        <Insert key={text}>
                            <Icon name="power" size={11} color={on ? '#2a68c8' : '#76828f'} />
                            <span>{on ? text.slice(1) : text}</span>
                            <Icon name="caret" size={6} color="#97a5b5" />
                        </Insert>
                    )
                })}
            </Inserts>
            <Bright $c={{ bright: c.base }} />
            <Bright $c={c} />
            <Pan />
            <PanText>
                <span>{(channel.fx || channel.fold) && <Icon name="caretLine" size={9} />}</span>
                <span>&lt;C&gt;</span>
            </PanText>
            <Switches>
                <Switch $flat={grey}>M</Switch>
                <Switch $flat={grey} $bg={channel.fx && '#0bbd55'}>S</Switch>
                {channel.fx ? (
                    <Switch $wide $flat={grey} $ink={grey ? '#9fd3ec' : '#c9d2a8'}>立体声</Switch>
                ) : (
                    <>
                        <Switch aria-label="rec">
                            <Icon name="dot" size={11} color={c.head ? '#fff' : undefined} />
                        </Switch>
                        <Switch aria-label="mon" $bg={channel.live && '#5eb0cb'}>
                            <Icon name="monitor" size={11} />
                        </Switch>
                    </>
                )}
            </Switches>
            <Level>{channel.level}</Level>
            <MeterRow>
                <Scale>
                    {(channel.live ? liveScale : scale).map(([db, top]) => (
                        <Mark key={db} $top={top}>{db}</Mark>
                    ))}
                </Scale>
                <Meter $fill={channel.live ? 56 : 0} />
                <Slot>
                    <Fader
                        type="range"
                        min="0"
                        max="78"
                        $blue={channel.fx}
                        value={value}
                        aria-label={channel.name}
                        onChange={(e) => setValue(Number(e.target.value))}
                    />
                </Slot>
                <MeterSide>
                    <Mini $half={channel.fx || channel.fold} />
                    <Icon name="knob" size={15} />
                </MeterSide>
            </MeterRow>
            <NumberRow>
                {number}
                <Kind $strong={Boolean(c.head) && !grey}>{channel.fx ? 'FX' : <Icon name="wave" w={15} h={13} />}</Kind>
            </NumberRow>
            <Auto $c={c}>自动: 关</Auto>
            <Bright $c={c} />
            <Badge>{channel.icon ? <Icon name={channel.icon} w={18} h={18} /> : grey && 'FX'}</Badge>
            <Name $c={c}>{channel.name}</Name>
        </Strip>
    )
}

/* ---------- transport ---------- */

const TransportRow = styled.footer`
    display: flex;
    height: 42px;
    background: #c4d2ea;
    font-family: ${ui};
`

const Transport = styled.div`
    flex: 1;
    display: flex;
    align-items: center;
    height: 39px;
    margin-left: 14px;
    padding-left: 8px;
    background: #131416;
    color: #c6c8ca;
    clip-path: polygon(0 0, 100% 0, calc(100% - 12px) 100%, 8px 100%);
`

const Cell = styled.div`
    display: flex;
    flex: none;
    flex-direction: column;
    align-items: ${(p) => (p.$left ? 'flex-start' : 'center')};
    justify-content: center;
    gap: ${(p) => p.$gap || 0}px;
    width: ${(p) => p.$w}px;
    font-size: 12px;
    line-height: 15px;
    white-space: nowrap;

    small {
        display: flex;
        align-items: center;
        gap: 4px;
        font-size: 10px;
        line-height: 14px;
        color: #8b8e91;
    }
`

const Clock = styled.strong`
    font-size: 18px;
    line-height: 18px;
    color: #d6d7d8;
`

const Pair = styled.div`
    display: flex;
    gap: ${(p) => p.$gap || 8}px;
    color: #8b8e91;
`

const Bar = styled.div`
    width: ${(p) => p.$w || 61}px;
    height: ${(p) => p.$h || 5}px;
    margin-bottom: 1px;
    background: linear-gradient(90deg, #65a4bd ${(p) => p.$v}%, #36393c ${(p) => p.$v}%);
`

const Ticks = styled.div`
    width: 62px;
    height: 8px;
    margin-top: 4px;
    background:
        repeating-linear-gradient(90deg, transparent 0, transparent 2px, #131416 2px, #131416 3px),
        linear-gradient(90deg, #65a4bd 74%, #36393c 74%);
`

const LR = styled.div`
    color: #3f86a3;
    font-weight: bold;
    font-size: 10px;
    line-height: 14px;
    padding-right: 5px;
    border-right: 1px solid #36393c;
`

const Views = styled.div`
    display: flex;
    width: 165px;
    margin-left: 8px;
    border-left: 1px solid #93a3bd;
`

const View = styled.button`
    flex: none;
    width: 52px;
    font-size: 11px;
    background: ${(p) => (p.$on ? '#2184f4' : 'transparent')};
    color: ${(p) => (p.$on ? '#fff' : '#1f2a3a')};
`

const Edge = styled.div`
    height: 4px;
    background: #6c8fbd;
`

/* ---------- taskbar ---------- */

const Taskbar = styled.footer`
    display: flex;
    align-items: stretch;
    height: 36px;
    padding-left: 9px;
    background: #f2f2f3;
    font-size: 12px;
`

const Tasks = styled.div`
    display: flex;
    gap: 15px;
    margin-left: 19px;
`

const Task = styled.button`
    display: flex;
    align-items: center;
    gap: 5px;
    width: 127px;
    padding-left: 2px;
    border-bottom: 2px solid #4c4345;
    background: ${(p) => (p.$on ? '#fbfbfb' : 'transparent')};
    white-space: nowrap;
    overflow: hidden;
`

const Tray = styled.div`
    display: flex;
    align-items: center;
    gap: 11px;
    margin-left: auto;
    padding-right: 7px;
`

const Ime = styled.span`
    border: 1px solid #333;
    line-height: 13px;
    padding: 0 1px;
`

const Time = styled.div`
    width: 62px;
    text-align: center;
    line-height: 17px;
`

const Notice = styled.div`
    position: relative;
    width: 24px;
    height: 24px;

    span {
        position: absolute;
        right: 0;
        bottom: 0;
        width: 15px;
        height: 15px;
        border: 1px solid #8b8b8b;
        border-radius: 50%;
        background: #d2d2d2;
        font: bold 10px/13px ${ui};
        text-align: center;
    }
`

/* ---------- floating windows ---------- */

const LinkTool = styled.div`
    position: absolute;
    top: 97px;
    right: 38px;
    width: 235px;
    height: 388px;
    overflow: hidden;
    border-radius: 3px 3px 0 0;
    background: #000;
    color: #e2e2e2;
    font: 12px/16px "DejaVu Sans", sans-serif;
`

const LinkTitle = styled.div`
    display: flex;
    align-items: center;
    justify-content: space-between;
    height: 27px;
    padding-left: 8px;
    background: #f8f8f8;
    color: #858585;
    font: 11px "Open Sans", sans-serif;

    &::after {
        content: '';
        width: 19px;
        height: 18px;
        background: #dcdcdc;
    }
`

const LinkHeading = styled.h2`
    margin: 0;
    padding-left: 2px;
    height: ${(p) => p.$h || 17}px;
    font: bold 12px/17px "DejaVu Sans", sans-serif;
    color: #fff;
`

const LinkField = styled.div`
    display: flex;
    align-items: center;
    height: 17px;
    padding-left: 2px;

    label {
        flex: 1;
    }
`

const LinkSelect = styled.span`
    display: flex;
    align-items: center;
    justify-content: space-between;
    width: ${(p) => p.$w}px;
    height: 15px;
    padding-right: 3px;
    border: 1px solid #d9d9d9;
    background: #3a3a3a;
    color: #c9c9c9;

    select {
        appearance: none;
        flex: 1;
        min-width: 0;
        padding-left: 1px;
        line-height: 13px;
        color: #e6e6e6;
    }
`

const LinkButton = styled.button`
    flex: 1;
    height: ${(p) => p.$h || 17}px;
    width: ${(p) => (p.$block ? '100%' : 'auto')};
    display: block;
    border: 1px solid #000;
    border-radius: 4px;
    background: ${(p) => (p.$grey ? '#9c9a99' : '#bfe3dc')} padding-box;
    color: #0b0b0b;
    font-weight: bold;
    line-height: 14px;
`

const LinkRow = styled.div`
    display: flex;
    align-items: center;
    height: 16px;
`

const LinkCheck = styled.label`
    display: flex;
    align-items: center;
    gap: 3px;
    height: 16px;
    padding-left: 2px;
    width: ${(p) => p.$w || 'auto'};
    white-space: nowrap;

    input {
        appearance: none;
        flex: none;
        width: 12px;
        height: 13px;
        border: 2px solid #e5a9b1;
        border-color: #8d5159 #f0c8cc #f0c8cc #8d5159;
        background: #e25469;
    }

    input:checked {
        border-color: #4f9c50 #cdf3cd #cdf3cd #4f9c50;
        background: #5fef62;
    }
`

function Check({ label, on, w }) {
    return (
        <LinkCheck $w={w}>
            <input type="checkbox" defaultChecked={on} />
            {label}
        </LinkCheck>
    )
}

function LinkPick({ id, w, value }) {
    return (
        <LinkSelect $w={w}>
            <select id={id} aria-label={value} defaultValue={value}>
                <option>{value}</option>
            </select>
            <Icon name="drop" w={10} h={11} />
        </LinkSelect>
    )
}

function AsioLink() {
    return (
        <LinkTool>
            <LinkTitle>ASIO Link Pro Tool</LinkTitle>
            <LinkHeading>ASIO settings</LinkHeading>
            <LinkField>
                <label htmlFor="rate">Sample rate</label>
                <LinkPick id="rate" w={118} value="ASIO preferred" />
            </LinkField>
            <LinkField>
                <label htmlFor="buffer">Buffer size</label>
                <LinkPick id="buffer" w={118} value="ASIO preferred" />
            </LinkField>
            <LinkField>
                <label htmlFor="in">Channels IN/OUT</label>
                <LinkPick id="in" w={59} value="64 in" />
                <LinkPick id="out" w={59} value="64 out" />
            </LinkField>
            <LinkRow>
                <LinkButton>Init ASIO</LinkButton>
                <LinkButton $grey>ASIO CPanel</LinkButton>
            </LinkRow>
            <LinkButton $block $h={33}>START ASIO</LinkButton>
            <LinkButton $block $grey>Stop ASIO</LinkButton>
            <LinkRow>
                <Check label="Test tone" w="118px" />
                <Check label="Send IN to OUT" />
            </LinkRow>
            <LinkHeading $h={16}>Tool settings</LinkHeading>
            <Check label="Start minimised and START ASIO" />
            <Check label="Start with windows" />
            <LinkHeading>ASIO Link Pro settings</LinkHeading>
            <Check label="Start ASIO Link Pro minimised" on />
            <Check label="Do not check for updates" />
            <Check label="Allow ASIO Link Pro to get focus" />
            <Check label="Enable LOOPER loopback racks" />
            <Check label="Enable second NETWORK IN/OUT" />
            <LinkHeading>ASIOVADPRO (WDM) settings</LinkHeading>
            <LinkRow>
                <Check label="WDM test tone" w="118px" />
                <LinkButton>WinMM CPanel</LinkButton>
            </LinkRow>
            <Check label="Use strict ASIO clock" />
        </LinkTool>
    )
}

const Dialog = styled.div`
    position: absolute;
    top: 471px;
    right: 8px;
    width: 519px;
    height: 230px;
    display: flex;
    flex-direction: column;
    border-radius: 7px;
    overflow: hidden;
    background: #403f4f;
    color: #eeeef2;
    font: 10px/12px ${ui};
`

const DialogTitle = styled.div`
    display: flex;
    align-items: center;
    gap: 5px;
    height: 28px;
    padding: 0 8px;
    background: #f4f4f4;
    color: #7d7d7d;
    font: 11px "Open Sans", sans-serif;

    button {
        margin-left: auto;
    }
`

const DialogBody = styled.div`
    flex: 1;
    display: grid;
    grid-template-columns: 291px 1fr;
    column-gap: 6px;
    padding: 2px 3px 0;
`

const Column = styled.div`
    display: flex;
    flex-direction: column;
`

const Bottom = styled(Column)`
    margin-top: auto;
`

const DialogHeading = styled.h3`
    flex: none;
    height: 15px;
    margin: ${(p) => p.$top || 0}px 0 0;
    background: #292a37;
    font: 10px/15px ${ui};
    text-align: center;
`

const Tree = styled.ul`
    flex: 1;
    margin: 0;
    padding: 3px 0 0 2px;
    list-style: none;
`

const TreeRow = styled.li`
    display: flex;
    align-items: center;
    gap: 2px;
    height: 12px;
    padding-left: ${(p) => (p.$deep ? 25 : p.$box ? 0 : 11)}px;
    white-space: nowrap;
`

const ExpandBox = styled.button`
    width: 9px;
    height: 9px;
    border: 1px solid #fff;
    background: #f2f2f2;
    color: #222;
    font: bold 9px/6px ${ui};
`

const TreeName = styled.span`
    padding: 0 2px;
    background: ${(p) => (p.$on ? '#f4f4f4' : 'transparent')};
    color: ${(p) => (p.$on ? '#16161c' : 'inherit')};
`

const DialogRow = styled.label`
    display: flex;
    align-items: center;
    justify-content: ${(p) => (p.$split ? 'space-between' : 'flex-start')};
    height: ${(p) => p.$h || 20}px;
    gap: 6px;
    padding: 0 3px;
    white-space: nowrap;

    input[type='checkbox'] {
        appearance: none;
        width: 12px;
        height: 12px;
        border-radius: 1px;
        background: #f7f7f7;
    }

    input[type='checkbox']:checked {
        background: #1a6fbf url("data:image/svg+xml,%3Csvg xmlns='http://www.w3.org/2000/svg' viewBox='0 0 12 12'%3E%3Cpath d='M3 6l2 2 4-4' fill='none' stroke='white'/%3E%3C/svg%3E");
    }
`

const Range = styled.input`
    appearance: none;
    width: ${(p) => p.$w || '106px'};
    height: 16px;
    background: linear-gradient(#f1f1f1, #f1f1f1) center / 100% ${(p) => p.$track || 4}px no-repeat;

    &::-webkit-slider-thumb {
        appearance: none;
        width: ${(p) => p.$thumb || 8}px;
        height: ${(p) => p.$tall || 15}px;
        background: #1483d8;
    }
`

const Tools = styled.div`
    display: flex;
    align-items: center;
    justify-content: flex-end;
    gap: 26px;
    height: 29px;
    padding-right: 7px;
`

const Raised = styled.button`
    display: flex;
    justify-content: center;
    width: ${(p) => p.$w}px;
    padding: 2px;
    background: linear-gradient(#5f5d76 50%, #454456 50%);
    box-shadow: 1px 1px 0 #1d1d28;
`

const devices = [
    { name: 'Realtek(R) Audio', box: '−', active: true, on: true },
    { name: 'Realtek HD Audio Line input', deep: true },
    { name: 'Realtek HD Audio Stereo input', deep: true },
    { name: 'Realtek HDA Primary output', deep: true, error: true },
    { name: 'Realtek HD Audio 2nd output', deep: true, active: true },
    { name: 'Realtek HD Audio Mic input', deep: true, active: true },
    { name: 'USB Microphone' },
    { name: 'ASIOVADPRO Driver', box: '+' },
    { name: 'A-MIC' },
]

function DeviceIcon({ active, error }) {
    return (
        <Svg width="23" height="11" viewBox="0 0 23 11" aria-hidden="true">
            {active ? (
                <>
                    <path d="M0 0h12v11H0z" fill="#2c6c72" />
                    <path d="M12 0h11v11H12z" fill="#3a4b59" />
                    <rect x="1.500" y="1.500" width="9" height="8" rx="1" fill="none" stroke="#b9f1ee" strokeWidth="1.500" />
                    <path d="M4 4v3h4V4M6 3v2" stroke="#d5fbf8" fill="none" />
                    <path d="M15 2v7l4-3.500z" fill="none" stroke="#c9f5f2" strokeWidth="1.200" />
                </>
            ) : (
                <>
                    <path d="M0 0h23v10H0z" fill="#4d4d5f" />
                    {error && <path d="M12 0h10v9H12z" fill="#a8324c" />}
                    <path d="M2 5v3q4 1.500 7 0V5M4 4v3M7 4v3M1 8h9" stroke="#14141c" strokeWidth="1.200" fill="none" />
                    <path d="M0 10.500h22.500V0" stroke="#1c1c26" fill="none" />
                    {error && <path d="M14 3l3 3 4-4" stroke="#e0687c" fill="none" />}
                </>
            )}
        </Svg>
    )
}

function Asio4All() {
    return (
        <Dialog>
            <DialogTitle>
                <Icon name="asio" w={14} h={15} />
                ASIO4ALL v2.14 - www.asio4all.com - feedback@asio4all.com
                <IconButton aria-label="close"><Icon name="close" size={15} /></IconButton>
            </DialogTitle>
            <DialogBody>
                <Column>
                    <DialogHeading>WDM Device List</DialogHeading>
                    <Tree>
                        {devices.map((d) => (
                            <TreeRow key={d.name} $deep={d.deep} $box={d.box}>
                                {d.box && <ExpandBox>{d.box}</ExpandBox>}
                                <DeviceIcon active={d.active} error={d.error} />
                                <TreeName $on={d.on}>{d.name}</TreeName>
                            </TreeRow>
                        ))}
                    </Tree>
                    <DialogHeading>ASIO Buffer Size = 128 Samples</DialogHeading>
                    <DialogRow $h={29}>
                        <Range type="range" aria-label="ASIO Buffer Size" $w="100%" $track={15} $thumb={12} $tall={21} min="0" max="100" defaultValue="21" />
                    </DialogRow>
                </Column>
                <Column>
                    <DialogHeading>Latency Compensation</DialogHeading>
                    <DialogRow $split>
                        In:&nbsp;&nbsp; 0 Samples
                        <Range type="range" defaultValue="0" />
                    </DialogRow>
                    <DialogRow $split>
                        Out: 0 Samples
                        <Range type="range" defaultValue="0" />
                    </DialogRow>
                    <DialogHeading $top={3}>Options</DialogHeading>
                    <DialogRow $h={22}>
                        <input type="checkbox" />
                        Allow Pull Mode (WaveRT)
                    </DialogRow>
                    <DialogRow $split $h={18}>
                        Buffer Offset: 4 ms
                        <Range type="range" defaultValue="20" />
                    </DialogRow>
                    <DialogRow>
                        <input type="checkbox" defaultChecked />
                        Always Resample 44.1kHz &lt;-&gt; 48kHz
                    </DialogRow>
                    <DialogRow>
                        <input type="checkbox" />
                        Force WDM Driver To 16 Bit
                    </DialogRow>
                    <Bottom>
                        <DialogHeading as="div" />
                        <Tools>
                            <Raised $w={27} aria-label="defaults"><Icon name="chute" w={18} h={17} /></Raised>
                            <Raised $w={38} aria-label="advanced">
                                <Svg width="36" height="17" viewBox="0 0 36 17" aria-hidden="true">
                                    <path d="M8 5l20 8M8 12l20-8" stroke="#b0184f" strokeWidth="3" />
                                    <path d="M3 1q8-1 8 4l3 2-2 2-4-1q-4 1-6-2 4 0 4-2zM1 13q4 1 5-2l5-2 2 2-3 2q-2 4-8 3zM33 1q-8-1-8 4l-3 2 2 2 4-1q4 1 6-2-4 0-4-2zM35 13q-4 1-5-2l-5-2-2 2 3 2q2 4 8 3z" fill="#f4f0f2" />
                                </Svg>
                            </Raised>
                        </Tools>
                    </Bottom>
                </Column>
            </DialogBody>
        </Dialog>
    )
}

const Caption = styled.p`
    position: absolute;
    left: 0;
    right: 0;
    bottom: 85px;
    margin: 0;
    text-align: center;
    font: 500 49px/50px "Noto Sans CJK SC", sans-serif;
    color: #fdee21;
    text-shadow:
        4px 0 #000, -4px 0 #000, 0 4px #000, 0 -4px #000,
        3px 3px #000, -3px 3px #000, 3px -3px #000, -3px -3px #000,
        4px 2px #000, -4px 2px #000, 4px -2px #000, -4px -2px #000,
        2px 4px #000, -2px 4px #000, 2px -4px #000, -2px -4px #000,
        2px 2px #000, -2px -2px #000, 2px -2px #000, -2px 2px #000;
    pointer-events: none;
`

const Pointer = styled.div`
    position: absolute;
    top: 332px;
    left: 547px;
`

const Recorder = styled.div`
    position: absolute;
    right: 0;
    bottom: 37px;
    width: 26px;
    height: 31px;
    display: flex;
    align-items: center;
    justify-content: center;
    background: #26262c;
`

const tasks = [
    { icon: 'wechat', text: '微信' },
    { icon: 'wechat', text: '微信' },
    { icon: 'ding', text: '钉钉' },
    { icon: 'folder', text: 'D:\\短视频制作\\AI...' },
    { icon: 'note', text: '6.24.txt - 记事本' },
    { icon: 'music', text: '野蜂飞舞 (Live) - ...', on: true },
    { icon: 'obs', text: 'OBS 27.0.1 (64-...' },
    { icon: 'logo', text: 'Studio One - 30...', on: true },
]

const menus = ['文件', '编辑', '乐曲', '音轨', '事件', '音频', '走带', '查看', 'Studio One', '帮助', '【AI调音大师】']

const sideTools = ['hourglass', 'bowtie', 'toBar', 'fromBar', 'rack', 'keys', 'stack', 'people', 'lines']

function App() {
    return (
        <>
            <GlobalStyle />
            <Page>
                <TitleBar>
                    <Icon name="logo" size={13} />
                    Studio One - 300AI主播版*
                    <WindowButtons>
                        {['min', 'restore', 'close'].map((n) => (
                            <IconButton key={n} aria-label={n}><Icon name={n} size={16} /></IconButton>
                        ))}
                    </WindowButtons>
                </TitleBar>
                <Menu>
                    {menus.map((m) => <button key={m}>{m}</button>)}
                </Menu>

                <Toolbar>
                    <Info>
                        <InfoLine><Key>A</Key><Icon name="hand" size={12} /><b>Lo Mix</b></InfoLine>
                        <InfoLine><small>7 - 低音增强2</small><span>4.5 <Icon name="caret" w={9} h={11} /></span></InfoLine>
                    </Info>
                    <Group $gap={32}>
                        <Tool $on $w={17} aria-label="range"><Icon name="bracket" w={12} h={20} /></Tool>
                        <Tool $on $w={34} aria-label="arrow"><Icon name="cursor" size={17} /></Tool>
                        <Tool $on $w={34} aria-label="marquee"><Icon name="marquee" size={16} /></Tool>
                        {['brush', 'eraser', 'pencil', 'mute', 'bend', 'listen'].map((n) => (
                            <Tool key={n} aria-label={n}><Icon name={n} size={16} /></Tool>
                        ))}
                    </Group>
                    <Group $gap={14}>
                        {['strip1', 'strip2', 'q', 'lens'].map((n) => (
                            <Tool key={n} $w={29} aria-label={n}><Icon name={n} w={16} h={17} /></Tool>
                        ))}
                    </Group>
                    <Group $gap={14}>
                        <Tool $w={29}>IQ</Tool>
                        <ToolbarPick label="量化" value="1/16" />
                        <ToolbarPick label="时基" value="小节" />
                        <ToolbarPick label="吸附" value="自适应" />
                        <Tool $on aria-label="snap"><Icon name="snap" w={17} h={20} /></Tool>
                    </Group>
                    <Group $gap={15}>
                        <Tool aria-label="follow"><Icon name="follow" w={15} h={14} /></Tool>
                        <Tool $on aria-label="scroll"><Icon name="arrowBar" w={17} h={20} /></Tool>
                        <Tool $on aria-label="split"><Icon name="split" w={14} h={20} /></Tool>
                    </Group>
                    <Group><Tool aria-label="fit"><Icon name="vfit" w={14} h={16} /></Tool></Group>
                    <Group><Tool $w={32} $size={17}>?</Tool></Group>
                    <Group><Tool aria-label="video"><Icon name="film" size={17} /></Tool></Group>
                    <Group>
                        <Tool $w={43} aria-label="views">
                            <Icon name="grid" w={20} h={18} />
                            <Icon name="caret" size={8} color="#7a889d" />
                        </Tool>
                    </Group>
                    <Account>
                        <IconButton aria-label="user"><Icon name="user" w={21} h={21} /></IconButton>
                        <IconButton aria-label="home"><Icon name="home" w={21} h={21} /></IconButton>
                        <IconButton aria-label="page" $color="#98a8c2"><Icon name="page" w={22} h={21} /></IconButton>
                    </Account>
                </Toolbar>

                <Ruler />

                <Mixer>
                    <Side>
                        <SideRow $gap={20}><Icon name="cross" size={11} /><Icon name="pin" size={11} /></SideRow>
                        <SideRow>输入/输出<Icon name="caret" size={8} /></SideRow>
                        <SideRow $gap={14}><Icon name="wrench" size={12} /><span /></SideRow>
                        <SideRow $gap={14}><Icon name="fader" w={13} h={14} color="#5a6678" /><Icon name="caret" size={8} /></SideRow>
                        <SideTools>
                            {sideTools.map((n) => (
                                <SideTool key={n} $on={n === 'fromBar'} $dim={n === 'stack'} aria-label={n}>
                                    <Icon name={n} w={n === 'hourglass' ? 11 : 16} h={n === 'hourglass' ? 17 : 11} />
                                </SideTool>
                            ))}
                        </SideTools>
                    </Side>
                    <Console>
                        <Channels>
                            {channels.map((channel, i) => (
                                <ChannelStrip key={channel.level + i} channel={channel} number={i + 1} />
                            ))}
                        </Channels>
                        <ScrollRow><Icon name="back" size={9} /></ScrollRow>
                    </Console>
                    <RightArea>
                        <Master>
                            <Bright $c={{ bright: '#b9c2cc' }} />
                            <MasterRow $bg="#2a505e" $ink="#5f8995"><Icon name="caret" size={7} /></MasterRow>
                            <MasterRow><Icon name="caret" size={7} /><Icon name="plus" size={8} /></MasterRow>
                            <MasterRow $bg="#aebbca" $ink="#1c2530">混、 2<Icon name="caret" size={4} color="#97a5b5" /></MasterRow>
                            <MasterRow $bg="#aebbca"><Icon name="caret" size={6} color="#97a5b5" /></MasterRow>
                            <MasterRow $bg="#aebbca"><Icon name="caret" size={6} color="#97a5b5" /></MasterRow>
                            <MasterGap $h={95} />
                            <MasterRow><Icon name="caret" size={7} /><Icon name="plus" size={8} /></MasterRow>
                            <MasterGap $h={64} />
                            <MasterValue>-20.0</MasterValue>
                            <Switches>
                                <Switch $flat>M</Switch>
                                <Switch $flat>S</Switch>
                                <Switch $flat aria-label="mono" />
                                <Switch $flat aria-label="stereo"><Icon name="stereo" size={13} /></Switch>
                            </Switches>
                        </Master>
                        <ScrollRow />
                    </RightArea>
                </Mixer>

                <TransportRow>
                    <Transport>
                        <Cell $w={40}><Icon name="midi" w={25} h={17} /><small>MIDI</small></Cell>
                        <Cell $w={67}>
                            <Bar $v={40} />
                            <Bar $v={0} />
                            <small>性能</small>
                        </Cell>
                        <Cell $w={44}><Icon name="ring" size={22} /></Cell>
                        <Cell $w={89} $left>6:05 天<small>最大剩余录音时间</small></Cell>
                        <Cell $w={144}>
                            <Clock>00001.01.01.00</Clock>
                            <small>小节 <Icon name="caret" size={7} /></small>
                        </Cell>
                        {[['back', 24, 13], ['rew', 26, 17], ['fwd', 26, 17], ['next', 22, 14], ['start', 24, 14], ['stop', 44, 19], ['play', 25, 18], ['rec', 36, 19]].map(([n, w, s]) => (
                            <Cell key={n} $w={w}>
                                <IconButton aria-label={n} $color="#c9cacb"><Icon name={n} w={s} h={s < 18 ? 15 : s} /></IconButton>
                            </Cell>
                        ))}
                        <Cell $w={42}>
                            <IconButton aria-label="loop" $color="#9b9ea1"><Icon name="loop" w={30} h={21} /></IconButton>
                        </Cell>
                        <Cell $w={31}><LR>L<br />R</LR></Cell>
                        <Cell $w={94} $left>
                            <span>00001.01.01.00</span>
                            <span>00001.01.01.00</span>
                        </Cell>
                        <Cell $w={44}>开启<small>同步</small></Cell>
                        <Cell $w={48} $gap={4}>
                            <Pair><Icon name="curve" w={15} h={11} /><Icon name="punch" w={15} h={11} /></Pair>
                            <Pair><Icon name="gear" w={10} h={10} /><Icon name="punch2" w={16} h={10} /></Pair>
                        </Cell>
                        <Cell $w={62}>
                            <Pair><Icon name="dot" w={12} h={12} /><Icon name="wrench" w={11} h={12} /><Icon name="metro" w={11} h={11} /></Pair>
                            <small>节拍器</small>
                        </Cell>
                        <Cell $w={52}>4 / 4<small>时间修整</small></Cell>
                        <Cell $w={32}>-<small>键</small></Cell>
                        <Cell $w={56}>120.00<small>速度</small></Cell>
                        <Cell $w={96}>
                            <Bar $w={83} $h={4} $v={44} />
                            <Bar $w={83} $h={4} $v={44} />
                            <Pair $gap={7}>
                                <Ticks />
                                <Icon name="link" w={14} h={13} />
                            </Pair>
                        </Cell>
                    </Transport>
                    <Views>
                        <View>编辑</View>
                        <View $on>混音</View>
                        <View>浏览</View>
                    </Views>
                </TransportRow>
                <Edge />

                <Taskbar>
                    <IconButton aria-label="start"><Icon name="start7" size={33} /></IconButton>
                    <Tasks>
                        {tasks.map((t, i) => (
                            <Task key={t.text + i} $on={t.on}>
                                <Icon name={t.icon} size={20} />
                                {t.text}
                            </Task>
                        ))}
                    </Tasks>
                    <Tray>
                        <Icon name="up" size={11} />
                        <Icon name="toolTray" w={15} h={14} />
                        <Icon name="mic2" w={11} h={15} />
                        <span>中</span>
                        <Ime>拼</Ime>
                        <Time>21:40:09<br />2024/6/24</Time>
                        <Notice><Icon name="chat" w={14} h={15} /><span>2</span></Notice>
                    </Tray>
                </Taskbar>

                <AsioLink />
                <Asio4All />
                <Recorder><Icon name="tray" size={18} /></Recorder>
                <Pointer>
                    <Svg width="12" height="17" viewBox="0 0 12 17" aria-hidden="true">
                        <path d="M1 1v13l3-3 2 5 2.500-1-2-4.500H11z" fill="#fff" stroke="#111" />
                    </Svg>
                </Pointer>
                <Caption>手机声卡效果不好</Caption>
            </Page>
        </>
    )
}

export default App
